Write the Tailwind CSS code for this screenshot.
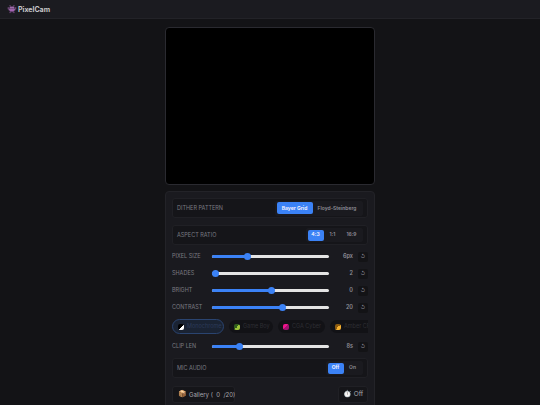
<!DOCTYPE html>
<html>
<head>
<meta charset="utf-8">
<script src="https://cdn.jsdelivr.net/npm/@tailwindcss/browser@4"></script>
</head>
<body class="bg-[#131316] font-['Inter','Liberation_Sans',sans-serif] h-[405px] w-[540px] overflow-hidden flex flex-col">
<header class="h-[19px] shrink-0 bg-[#1b1b20] border-b border-[#232328] flex items-center pl-[7px] gap-[2px]">
  <span class="w-[9px] text-[8px] leading-none font-['Noto_Sans',sans-serif] text-[#a05cc8]">👾</span>
  <span class="text-[7px] font-bold text-[#c8c8cc] leading-none">PixelCam</span>
</header>
<main class="flex flex-col items-center pt-[8px] gap-[6px]">
  <div class="w-[210px] h-[158px] bg-black border border-[#2a2a30] rounded-[4px] shrink-0"></div>
  <section class="w-[210px] h-[300px] shrink-0 bg-[#1a1a1f] border border-[#232328] rounded-[4px] px-[6px] pt-[6px] flex flex-col">
    <div class="h-[20px] shrink-0 flex items-center justify-between bg-[#151519] border border-[#202025] rounded-[3px] pl-[4px] pr-[4px]">
      <span class="pt-[1px] text-[5.5px] text-[#7a7a82]">DITHER PATTERN</span>
      <div class="flex bg-[#1a1a1f] rounded-[2px] p-[1.5px]">
        <span class="w-[36px] h-[12px] pt-[1px] flex items-center justify-center bg-[#3b82f6] rounded-[2px] text-[5px] font-bold text-[#eef]">Bayer Grid</span>
        <span class="w-[49px] h-[12px] pt-[1px] flex items-center justify-center text-[5px] font-semibold text-[#8e8e96]">Floyd-Steinberg</span>
      </div>
    </div>
    <div class="h-[20px] shrink-0 mt-[7px] flex items-center justify-between bg-[#151519] border border-[#202025] rounded-[3px] pl-[4px] pr-[4px]">
      <span class="pt-[1px] text-[5.5px] text-[#7a7a82]">ASPECT RATIO</span>
      <div class="flex bg-[#1a1a1f] rounded-[2px] p-[1.5px]">
        <span class="w-[16px] h-[11px] flex items-center justify-center bg-[#3b82f6] rounded-[2px] text-[5px] font-bold text-[#eef]">4:3</span>
        <span class="w-[18px] h-[11px] flex items-center justify-center text-[5px] font-semibold text-[#8e8e96]">1:1</span>
        <span class="w-[20px] h-[11px] flex items-center justify-center text-[5px] font-semibold text-[#8e8e96]">16:9</span>
      </div>
    </div>

    <div class="h-[17px] shrink-0 mt-[3px] flex items-center">
      <span class="w-[40px] text-[5.5px] text-[#7a7a82]">PIXEL SIZE</span>
      <div class="w-[117px] h-[3px] bg-[#e4e4e4] rounded-full relative"><div class="h-full w-[35px] bg-[#3b82f6] rounded-full"></div><div class="absolute left-[32px] top-[-2px] size-[7px] bg-[#3b82f6] rounded-full"></div></div>
      <span class="w-[24px] text-right text-[5.5px] font-semibold text-[#8e8e96]">6px</span>
      <span class="ml-[5px] size-[10px] bg-[#131316] rounded-[2px] flex items-center justify-center text-[5px] text-[#8e8e96]">↺</span>
    </div>
    <div class="h-[17px] shrink-0 flex items-center">
      <span class="w-[40px] text-[5.5px] text-[#7a7a82]">SHADES</span>
      <div class="w-[117px] h-[3px] bg-[#e4e4e4] rounded-full relative"><div class="h-full w-[2px] bg-[#3b82f6] rounded-full"></div><div class="absolute left-0 top-[-2px] size-[7px] bg-[#3b82f6] rounded-full"></div></div>
      <span class="w-[24px] text-right text-[5.5px] font-semibold text-[#8e8e96]">2</span>
      <span class="ml-[5px] size-[10px] bg-[#131316] rounded-[2px] flex items-center justify-center text-[5px] text-[#8e8e96]">↺</span>
    </div>
    <div class="h-[17px] shrink-0 flex items-center">
      <span class="w-[40px] text-[5.5px] text-[#7a7a82]">BRIGHT</span>
      <div class="w-[117px] h-[3px] bg-[#e4e4e4] rounded-full relative"><div class="h-full w-[59px] bg-[#3b82f6] rounded-full"></div><div class="absolute left-[56px] top-[-2px] size-[7px] bg-[#3b82f6] rounded-full"></div></div>
      <span class="w-[24px] text-right text-[5.5px] font-semibold text-[#8e8e96]">0</span>
      <span class="ml-[5px] size-[10px] bg-[#131316] rounded-[2px] flex items-center justify-center text-[5px] text-[#8e8e96]">↺</span>
    </div>
    <div class="h-[17px] shrink-0 flex items-center">
      <span class="w-[40px] text-[5.5px] text-[#7a7a82]">CONTRAST</span>
      <div class="w-[117px] h-[3px] bg-[#e4e4e4] rounded-full relative"><div class="h-full w-[70px] bg-[#3b82f6] rounded-full"></div><div class="absolute left-[67px] top-[-2px] size-[7px] bg-[#3b82f6] rounded-full"></div></div>
      <span class="w-[24px] text-right text-[5.5px] font-semibold text-[#8e8e96]">20</span>
      <span class="ml-[5px] size-[10px] bg-[#131316] rounded-[2px] flex items-center justify-center text-[5px] text-[#8e8e96]">↺</span>
    </div>

    <div class="mt-[3px] flex gap-[5px] overflow-hidden w-[196px] h-[15px] shrink-0 items-center whitespace-nowrap">
      <div class="shrink-0 w-[52px] h-[15px] rounded-full bg-[#1a2333] border border-[#2a4470] flex items-center pl-[5px] gap-[3px] text-[5.5px] text-[#2c3a58]">
        <span class="size-[6px] shrink-0 rounded-[2px] bg-[linear-gradient(135deg,#000_50%,#fff_50%)]"></span><span>Monochrome</span></div>
      <div class="shrink-0 w-[44px] h-[13px] rounded-full bg-[#121216] flex items-center pl-[5px] gap-[3px] text-[5.5px] text-[#2e2e34]">
        <span class="size-[6px] shrink-0 rounded-[2px] bg-[linear-gradient(135deg,#2f5d1c_50%,#9bc23a_50%)]"></span><span>Game Boy</span></div>
      <div class="shrink-0 w-[47px] h-[13px] rounded-full bg-[#121216] flex items-center pl-[5px] gap-[3px] text-[5.5px] text-[#2e2e34]">
        <span class="size-[6px] shrink-0 rounded-[2px] bg-[linear-gradient(135deg,#f0148c_50%,#a01070_50%)]"></span><span>CGA Cyber</span></div>
      <div class="shrink-0 w-[50px] h-[13px] rounded-full bg-[#121216] flex items-center pl-[5px] gap-[3px] text-[5.5px] text-[#2e2e34]">
        <span class="size-[6px] shrink-0 rounded-[2px] bg-[linear-gradient(135deg,#8a5a10_50%,#f5b030_50%)]"></span><span>Amber CRT</span></div>
    </div>

    <div class="h-[17px] shrink-0 mt-[4px] flex items-center">
      <span class="w-[40px] text-[5.5px] text-[#7a7a82]">CLIP LEN</span>
      <div class="w-[117px] h-[3px] bg-[#e4e4e4] rounded-full relative"><div class="h-full w-[27px] bg-[#3b82f6] rounded-full"></div><div class="absolute left-[24px] top-[-2px] size-[7px] bg-[#3b82f6] rounded-full"></div></div>
      <span class="w-[24px] text-right text-[5.5px] font-semibold text-[#8e8e96]">8s</span>
      <span class="ml-[5px] size-[10px] bg-[#131316] rounded-[2px] flex items-center justify-center text-[5px] text-[#8e8e96]">↺</span>
    </div>

    <div class="h-[20px] shrink-0 mt-[3px] flex items-center justify-between bg-[#151519] border border-[#202025] rounded-[3px] pl-[4px] pr-[4px]">
      <span class="pt-[1px] text-[5.5px] text-[#7a7a82]">MIC AUDIO</span>
      <div class="flex bg-[#1a1a1f] rounded-[2px] p-[1.5px]">
        <span class="w-[16px] h-[11px] flex items-center justify-center bg-[#3b82f6] rounded-[2px] text-[5px] font-bold text-[#eef]">Off</span>
        <span class="w-[18px] h-[11px] flex items-center justify-center text-[5px] font-semibold text-[#8e8e96]">On</span>
      </div>
    </div>

    <div class="mt-[8px] flex justify-between whitespace-nowrap">
      <div class="w-[63px] h-[17px] bg-[#151519] border border-[#202025] rounded-[3px] flex items-center pl-[5px] gap-[2px] text-[6px] text-[#a8a8ae]"><span class="text-[7px] font-['Noto_Sans',sans-serif]">📦</span><span>Gallery ( &nbsp;0&nbsp; /20)</span></div>
      <div class="w-[30px] h-[17px] bg-[#151519] border border-[#202025] rounded-[3px] flex items-center justify-center gap-[2px] text-[6.5px] text-[#a8a8ae]"><span class="text-[7px] font-['Noto_Sans',sans-serif]">⏱️</span><span>Off</span></div>
    </div>
  </section>
</main>
</body>
</html>
